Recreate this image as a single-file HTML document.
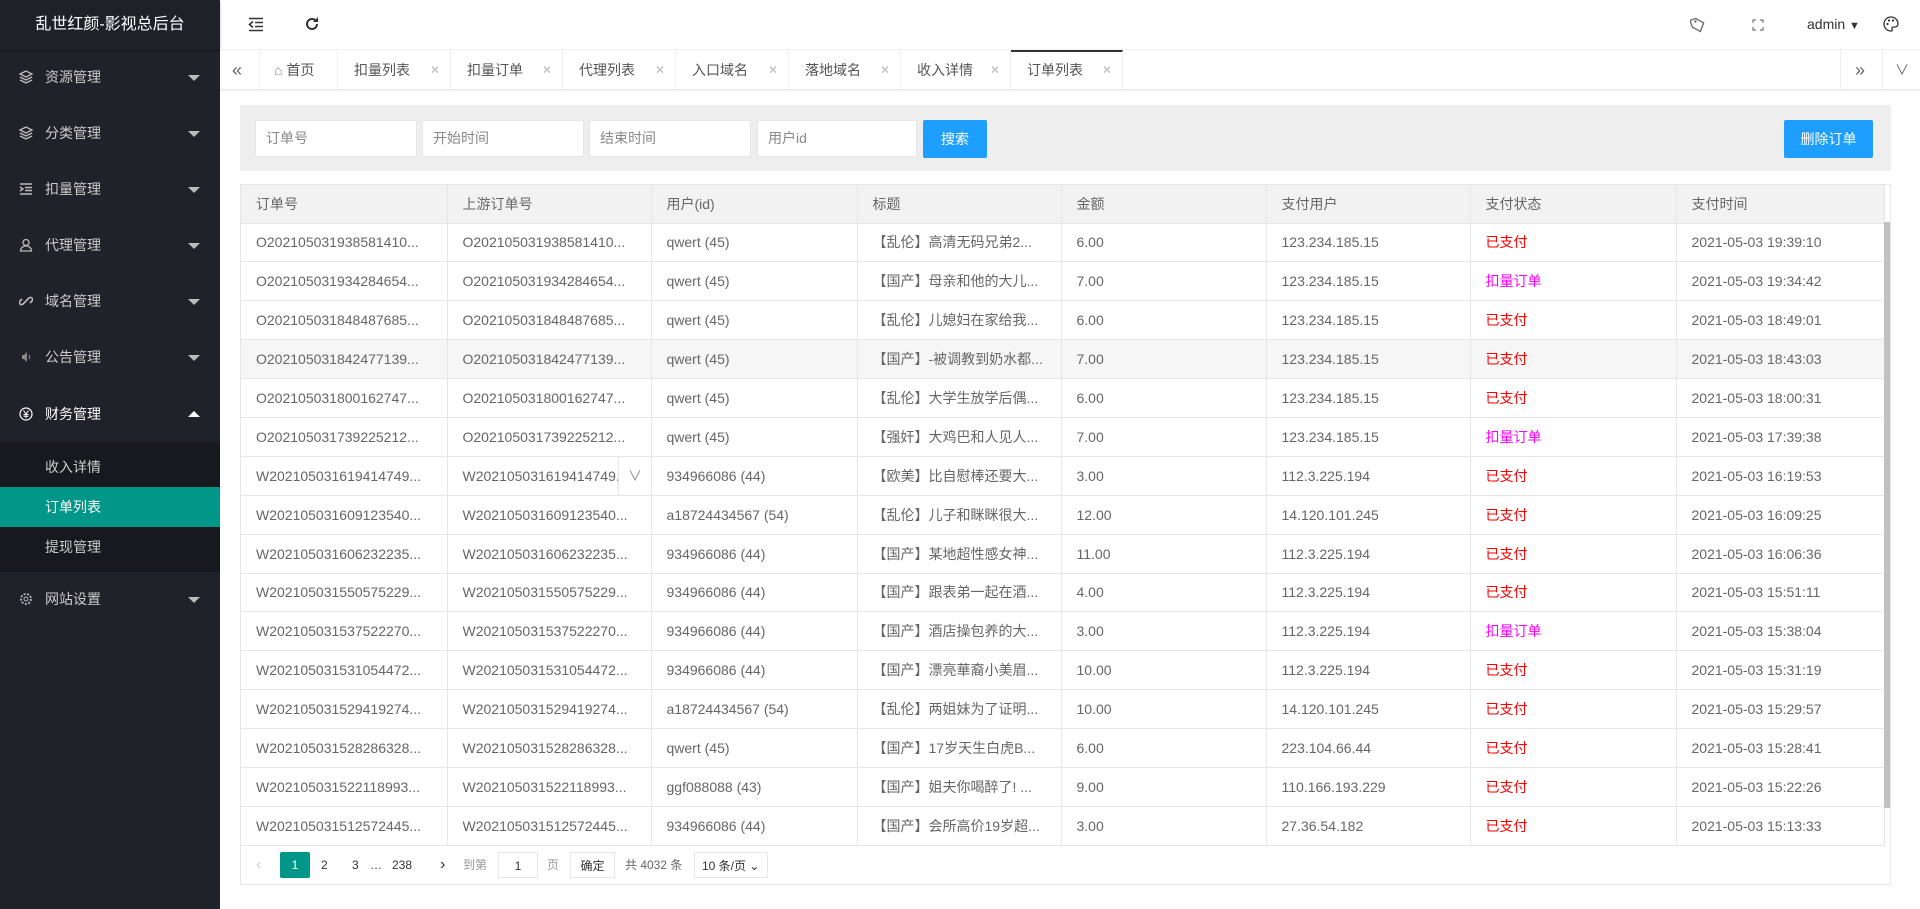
<!DOCTYPE html>
<html><head><meta charset="utf-8"><style>
*{box-sizing:border-box;margin:0;padding:0}
body{width:1920px;height:909px;overflow:hidden;background:#fff;font-family:"Liberation Sans","Noto Sans CJK SC",sans-serif;font-size:14px;color:#666;position:relative}
.side{position:absolute;left:0;top:0;width:220px;height:909px;background:#20222a}
.logo{height:50px;line-height:50px;text-align:center;color:#fff;font-size:16px;background:#1f2128;box-shadow:0 1px 2px rgba(0,0,0,.3)}
.mi{position:absolute;left:0;width:220px;height:40px;line-height:40px;color:#ccc;font-size:14px;padding-left:45px}
.mi svg{position:absolute;left:19px;top:13px;width:14px;height:14px}
.mi:after{content:"";position:absolute;right:20px;top:18px;border:6px solid transparent;border-top-color:#bbb;border-bottom:0}
.mi.up:after{border-top:0;border-bottom:6px solid #fff;top:17px}
.mi.up{color:#fff}
.sub{position:absolute;left:0;top:442px;width:220px;height:130px;background:#18191e}
.si{position:absolute;left:0;width:220px;height:40px;line-height:40px;padding-left:45px;color:#ccc}
.head{position:absolute;left:220px;top:0;right:0;height:50px;border-bottom:1px solid #f0f0f0}
.head svg{position:absolute}
.tabs{position:absolute;left:220px;top:50px;right:0;height:40px;border-bottom:1px solid #e6e6e6;box-shadow:0 1px 2px rgba(0,0,0,.06)}
.tab{position:absolute;top:0;height:40px;line-height:40px;border-right:1px solid #eee;padding-left:16px;color:#555;font-size:14px}
.tab .x{position:absolute;right:10px;top:0;color:#bbb;font-size:12px}
.tab.on{border-top:2px solid #333;line-height:37px}
.panel{position:absolute;left:240px;top:105px;width:1651px;height:66px;background:#eee}
.inp{position:absolute;top:15px;height:37px;background:#fff;border:1px solid #e6e6e6;line-height:35px;padding-left:10px;color:#888;border-radius:2px}
.btn{position:absolute;top:15px;height:38px;line-height:38px;background:#1e9fff;color:#fff;text-align:center;border-radius:2px}
.tbl{position:absolute;left:240px;top:184px;width:1651px;height:701px;border:1px solid #e6e6e6}
table{border-collapse:collapse;table-layout:fixed;width:1643px}
td,th{border:1px solid #e6e6e6;border-left:0;padding-left:15px;white-space:nowrap;overflow:hidden;text-align:left;font-weight:normal;color:#666}
th{height:38px;background:#f2f2f2;border-top:0}
td{height:38.9px}
tr.h td{background:#f6f6f6}
.r{color:#f00}.m{color:#f0f}
.sb{position:absolute;left:1884px;top:222px;width:6px;height:586px;background:#c1c1c1}
.pg{position:absolute;top:852px;height:26px;line-height:26px;font-size:12px;color:#333}
</style></head><body>
<div class="side">
<div class="logo">乱世红颜-影视总后台</div>
<div class="mi" style="top:57px"><svg viewBox="0 0 14 14"><path d="M7 1L1 4l6 3 6-3zM1 7l6 3 6-3M1 10l6 3 6-3" fill="none" stroke="#bbb" stroke-width="1.4"/></svg>资源管理</div>
<div class="mi" style="top:113px"><svg viewBox="0 0 14 14"><path d="M7 1L1 4l6 3 6-3zM1 7l6 3 6-3M1 10l6 3 6-3" fill="none" stroke="#bbb" stroke-width="1.4"/></svg>分类管理</div>
<div class="mi" style="top:169px"><svg viewBox="0 0 14 14"><path d="M1 2h12M6 5.5h7M6 8.5h7M1 12h12M1 5l3 2-3 2" fill="none" stroke="#bbb" stroke-width="1.4"/></svg>扣量管理</div>
<div class="mi" style="top:225px"><svg viewBox="0 0 14 14"><circle cx="7" cy="4.5" r="3" fill="none" stroke="#bbb" stroke-width="1.3"/><path d="M1.5 13c0-3 2.5-5 5.5-5s5.5 2 5.5 5z" fill="none" stroke="#bbb" stroke-width="1.3"/></svg>代理管理</div>
<div class="mi" style="top:281px"><svg viewBox="0 0 14 14"><path d="M6 8l-2 2a2 2 0 01-3-3l2-2M8 6l2-2a2 2 0 013 3l-2 2M5 9l4-4" fill="none" stroke="#bbb" stroke-width="1.6"/></svg>域名管理</div>
<div class="mi" style="top:337px"><svg viewBox="0 0 14 14"><path d="M3 5h2l3-3v10L5 9H3z" fill="#888"/><path d="M10 5c1 1 1 3 0 4" stroke="#888" fill="none"/></svg>公告管理</div>
<div class="mi up" style="top:394px"><svg viewBox="0 0 14 14"><circle cx="7" cy="7" r="6" fill="none" stroke="#fff" stroke-width="1.2"/><path d="M4.5 3.5L7 7l2.5-3.5M7 7v4M4.5 7.5h5M4.5 9.3h5" stroke="#fff" fill="none"/></svg>财务管理</div>
<div class="sub"></div>
<div class="si" style="top:447px">收入详情</div>
<div class="si" style="top:487px;background:#009688;color:#fff">订单列表</div>
<div class="si" style="top:527px">提现管理</div>
<div class="mi" style="top:579px"><svg viewBox="0 0 14 14"><circle cx="7" cy="7" r="2" fill="none" stroke="#bbb"/><circle cx="7" cy="7" r="5" fill="none" stroke="#bbb" stroke-width="1.8" stroke-dasharray="2 1.5"/></svg>网站设置</div>
</div>
<div class="head">
<svg style="left:28px;top:17px" width="16" height="15" viewBox="0 0 16 15"><path d="M1 1.5h14M7 5.5h8M7 9.5h8M1 13.5h14M5 4.5L1.5 7.5 5 10.5" fill="none" stroke="#333" stroke-width="1.6"/></svg>
<svg style="left:84px;top:16px" width="16" height="16" viewBox="0 0 16 16"><path d="M13 8a5 5 0 11-1.5-3.6" fill="none" stroke="#333" stroke-width="2"/><path d="M14 1v5h-5z" fill="#333"/></svg>
<svg style="left:1470px;top:16px" width="16" height="18" viewBox="0 0 16 18"><path d="M2 2h6l6 7-6 7-6-7z" fill="none" stroke="#666" stroke-width="1.3" transform="rotate(-20 8 9)"/><circle cx="5.5" cy="5.5" r="1.2" fill="#666"/></svg>
<svg style="left:1532px;top:19px" width="12" height="12" viewBox="0 0 12 12"><path d="M1 4V1h3M8 1h3v3M11 8v3H8M4 11H1V8" fill="none" stroke="#777" stroke-width="1.2"/></svg>
<div style="position:absolute;left:1587px;top:16px;color:#333">admin <span style="font-size:11px">▼</span></div>
<svg style="left:1663px;top:16px" width="16" height="16" viewBox="0 0 16 16"><path d="M8 1a7 7 0 000 14c1.5 0 1.5-1.5 1-2.3-.5-.9.2-1.7 1.2-1.7H12a3 3 0 003-3C15 4 12 1 8 1z" fill="none" stroke="#333" stroke-width="1.3"/><circle cx="4.5" cy="8" r="1.1" fill="#333"/><circle cx="6" cy="4.5" r="1.1" fill="#333"/><circle cx="10" cy="4.5" r="1.1" fill="#333"/></svg>
</div>
<div class="tabs">
<div class="tab" style="left:0;width:40px;padding-left:12px;font-size:18px;color:#666">«</div>
<div class="tab" style="left:40px;width:78px;padding-left:14px"><span style="color:#888">⌂</span> 首页</div>
<div class="tab" style="left:118px;width:113px">扣量列表<span class="x">✕</span></div>
<div class="tab" style="left:231px;width:112px">扣量订单<span class="x">✕</span></div>
<div class="tab" style="left:343px;width:113px">代理列表<span class="x">✕</span></div>
<div class="tab" style="left:456px;width:113px">入口域名<span class="x">✕</span></div>
<div class="tab" style="left:569px;width:112px">落地域名<span class="x">✕</span></div>
<div class="tab" style="left:681px;width:110px">收入详情<span class="x">✕</span></div>
<div class="tab on" style="left:791px;width:112px">订单列表<span class="x">✕</span></div>
<div class="tab" style="left:1620px;width:43px;border-left:1px solid #eee;padding-left:14px;font-size:18px;color:#666">»</div>
<div class="tab" style="left:1663px;width:37px;border-right:0;padding-left:12px;color:#666">∨</div>
</div>
<div class="panel">
<div class="inp" style="left:15px;width:162px">订单号</div>
<div class="inp" style="left:182px;width:162px">开始时间</div>
<div class="inp" style="left:349px;width:162px">结束时间</div>
<div class="inp" style="left:517px;width:160px">用户id</div>
<div class="btn" style="left:683px;width:64px">搜索</div>
<div class="btn" style="left:1544px;width:89px">删除订单</div>
</div>
<div class="tbl">
<table>
<colgroup><col style="width:206px"><col style="width:204px"><col style="width:206px"><col style="width:204px"><col style="width:205px"><col style="width:204px"><col style="width:206px"><col style="width:208px"></colgroup>
<tr><th>订单号</th><th>上游订单号</th><th>用户(id)</th><th>标题</th><th>金额</th><th>支付用户</th><th>支付状态</th><th>支付时间</th></tr>
<tr><td>O202105031938581410...</td><td>O202105031938581410...</td><td>qwert (45)</td><td>【乱伦】高清无码兄弟2...</td><td>6.00</td><td>123.234.185.15</td><td class="r">已支付</td><td>2021-05-03 19:39:10</td></tr>
<tr><td>O202105031934284654...</td><td>O202105031934284654...</td><td>qwert (45)</td><td>【国产】母亲和他的大儿...</td><td>7.00</td><td>123.234.185.15</td><td class="m">扣量订单</td><td>2021-05-03 19:34:42</td></tr>
<tr><td>O202105031848487685...</td><td>O202105031848487685...</td><td>qwert (45)</td><td>【乱伦】儿媳妇在家给我...</td><td>6.00</td><td>123.234.185.15</td><td class="r">已支付</td><td>2021-05-03 18:49:01</td></tr>
<tr class="h"><td>O202105031842477139...</td><td>O202105031842477139...</td><td>qwert (45)</td><td>【国产】-被调教到奶水都...</td><td>7.00</td><td>123.234.185.15</td><td class="r">已支付</td><td>2021-05-03 18:43:03</td></tr>
<tr><td>O202105031800162747...</td><td>O202105031800162747...</td><td>qwert (45)</td><td>【乱伦】大学生放学后偶...</td><td>6.00</td><td>123.234.185.15</td><td class="r">已支付</td><td>2021-05-03 18:00:31</td></tr>
<tr><td>O202105031739225212...</td><td>O202105031739225212...</td><td>qwert (45)</td><td>【强奸】大鸡巴和人见人...</td><td>7.00</td><td>123.234.185.15</td><td class="m">扣量订单</td><td>2021-05-03 17:39:38</td></tr>
<tr><td>W202105031619414749...</td><td style="position:relative">W202105031619414749.<span style="position:absolute;left:170px;top:0;height:38px;width:34px;border-left:1px solid #e6e6e6;text-align:center;line-height:38px;color:#888">∨</span></td><td>934966086 (44)</td><td>【欧美】比自慰棒还要大...</td><td>3.00</td><td>112.3.225.194</td><td class="r">已支付</td><td>2021-05-03 16:19:53</td></tr>
<tr><td>W202105031609123540...</td><td>W202105031609123540...</td><td>a18724434567 (54)</td><td>【乱伦】儿子和眯眯很大...</td><td>12.00</td><td>14.120.101.245</td><td class="r">已支付</td><td>2021-05-03 16:09:25</td></tr>
<tr><td>W202105031606232235...</td><td>W202105031606232235...</td><td>934966086 (44)</td><td>【国产】某地超性感女神...</td><td>11.00</td><td>112.3.225.194</td><td class="r">已支付</td><td>2021-05-03 16:06:36</td></tr>
<tr><td>W202105031550575229...</td><td>W202105031550575229...</td><td>934966086 (44)</td><td>【国产】跟表弟一起在酒...</td><td>4.00</td><td>112.3.225.194</td><td class="r">已支付</td><td>2021-05-03 15:51:11</td></tr>
<tr><td>W202105031537522270...</td><td>W202105031537522270...</td><td>934966086 (44)</td><td>【国产】酒店操包养的大...</td><td>3.00</td><td>112.3.225.194</td><td class="m">扣量订单</td><td>2021-05-03 15:38:04</td></tr>
<tr><td>W202105031531054472...</td><td>W202105031531054472...</td><td>934966086 (44)</td><td>【国产】漂亮華裔小美眉...</td><td>10.00</td><td>112.3.225.194</td><td class="r">已支付</td><td>2021-05-03 15:31:19</td></tr>
<tr><td>W202105031529419274...</td><td>W202105031529419274...</td><td>a18724434567 (54)</td><td>【乱伦】两姐妹为了证明...</td><td>10.00</td><td>14.120.101.245</td><td class="r">已支付</td><td>2021-05-03 15:29:57</td></tr>
<tr><td>W202105031528286328...</td><td>W202105031528286328...</td><td>qwert (45)</td><td>【国产】17岁天生白虎B...</td><td>6.00</td><td>223.104.66.44</td><td class="r">已支付</td><td>2021-05-03 15:28:41</td></tr>
<tr><td>W202105031522118993...</td><td>W202105031522118993...</td><td>ggf088088 (43)</td><td>【国产】姐夫你喝醉了! ...</td><td>9.00</td><td>110.166.193.229</td><td class="r">已支付</td><td>2021-05-03 15:22:26</td></tr>
<tr><td>W202105031512572445...</td><td>W202105031512572445...</td><td>934966086 (44)</td><td>【国产】会所高价19岁超...</td><td>3.00</td><td>27.36.54.182</td><td class="r">已支付</td><td>2021-05-03 15:13:33</td></tr>
</table>
</div>
<div class="sb"></div>
<div class="pg" style="left:256px;color:#ccc;font-size:16px">‹</div>
<div class="pg" style="left:280px;width:30px;background:#009688;color:#fff;text-align:center;border-radius:2px">1</div>
<div class="pg" style="left:321px">2</div>
<div class="pg" style="left:352px">3</div>
<div class="pg" style="left:370px">…</div>
<div class="pg" style="left:392px">238</div>
<div class="pg" style="left:440px;font-size:16px">›</div>
<div class="pg" style="left:463px;color:#999">到第</div>
<div class="pg" style="left:498px;width:40px;border:1px solid #e6e6e6;text-align:center">1</div>
<div class="pg" style="left:547px;color:#999">页</div>
<div class="pg" style="left:570px;width:45px;border:1px solid #e6e6e6;text-align:center">确定</div>
<div class="pg" style="left:625px;color:#666">共 4032 条</div>
<div class="pg" style="left:694px;width:74px;border:1px solid #e6e6e6;padding-left:7px">10 条/页 ⌄</div>
</body></html>
